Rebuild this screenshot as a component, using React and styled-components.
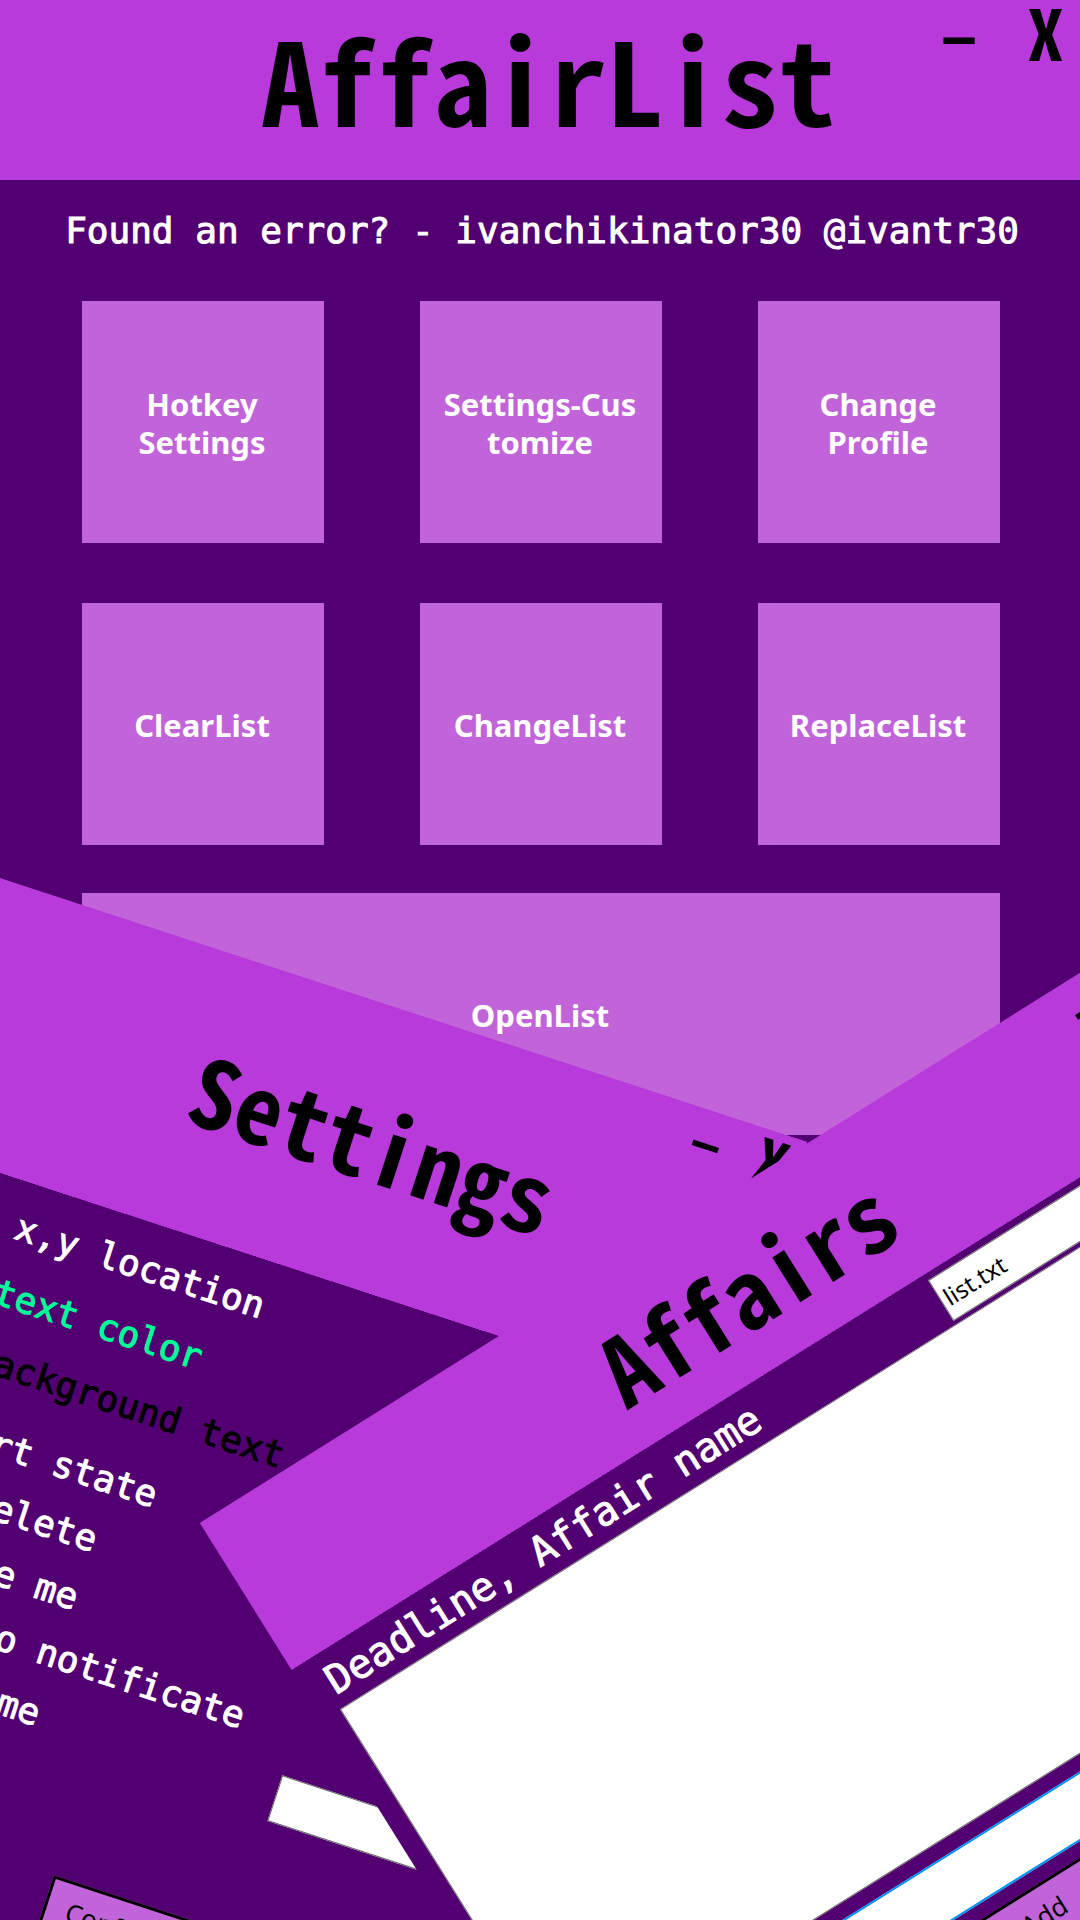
import React from "react";
import styled, { createGlobalStyle, css } from "styled-components";

const colors = {
  header: "#b83adb",
  body: "#520071",
  tile: "#c264d9",
  mint: "#00ff99",
  focus: "#0091f7",
  outline: "#6a6a6a",
};

const titleFont = `"Noto Sans Mono CJK JP", "DejaVu Sans Mono", monospace`;
const labelFont = `"DejaVu Sans Mono", monospace`;
const uiFont = `"Noto Sans", "Open Sans", sans-serif`;

const GlobalStyle = createGlobalStyle`
  *, *::before, *::after { box-sizing: border-box; }
  body { margin: 0; background: ${colors.body}; }
  h1, h2, p, ul { margin: 0; padding: 0; }
  button, input { font: inherit; margin: 0; }
`;

const Stage = styled.div`
  position: relative;
  min-height: 100vh;
  overflow: hidden;
  background: ${colors.body};
  color: #fff;
`;

/* A child window lying over the main one, turned around one of its top corners.
   The gradient paints bar and body in one layer, so turned edges stay clean. */
const FloatingWindow = styled.section`
  position: absolute;
  display: flex;
  flex-direction: column;
  background: linear-gradient(
    ${colors.header} ${(p) => p.$bar}px,
    ${colors.body} ${(p) => p.$bar}px
  );
`;

const SettingsWindow = styled(FloatingWindow)`
  top: 1142px;
  left: -73px;
  width: 880px;
  height: 1200px;
  transform-origin: top right;
  transform: rotate(18.1deg);
`;

const AffairsWindow = styled(FloatingWindow)`
  top: 1523px;
  left: 200px;
  width: 1120px;
  height: 960px;
  transform-origin: top left;
  transform: rotate(-32deg);
`;

const TitleBar = styled.header`
  display: grid;
  grid-template-columns: 1fr auto 1fr;
  align-items: start;
  flex: none;
  height: ${(p) => p.$height}px;
  padding-left: ${(p) => p.$inset}px;
  background: ${colors.header};
  color: #000;
`;

const Title = styled.h1`
  grid-column: 2;
  font: 700 ${(p) => p.$size}px/${(p) => p.$line}px ${titleFont};
  white-space: nowrap;
`;

const Controls = styled.div`
  justify-self: end;
  display: flex;
  gap: ${(p) => (p.$large ? 50 : 36)}px;
  padding-right: ${(p) => (p.$large ? 17 : 13)}px;
  font: 700 ${(p) => (p.$large ? "70px/62px" : "60px/54px")} ${titleFont};
`;

const ControlButton = styled.button`
  padding: 0;
  border: 0;
  background: none;
  color: #000;
  cursor: pointer;
`;

const Contact = styled.p`
  padding-left: 4px;
  font: 400 36px/101px ${labelFont};
  -webkit-text-stroke: 1px currentColor;
  text-align: center;
  white-space: nowrap;
`;

const Tiles = styled.nav`
  display: grid;
  grid-template-columns: repeat(3, 242px);
  justify-content: space-between;
  row-gap: 60px;
  padding: 20px 80px 0 82px;
`;

const Tile = styled.button`
  height: 242px;
  padding: 2px 16px 0 14px;
  border: 0;
  background: ${colors.tile};
  color: #fff;
  font: 700 31px/38px ${uiFont};
  text-align: center;
  cursor: pointer;
  ${(p) =>
    p.$wide &&
    css`
      grid-column: 1 / -1;
      margin-top: -12px;
    `}
`;

const Options = styled.ul`
  list-style: none;
  padding: 12px 0 0 3px;
  font: 400 36px ${labelFont};
  -webkit-text-stroke: 1px currentColor;
`;

const Option = styled.li`
  display: flex;
  height: ${(p) => (p.$tall ? 68 : 61)}px;
  line-height: ${(p) => (p.$tall ? 68 : 61)}px;
  margin-top: ${(p) => (p.$gap ? 12 : 0)}px;
  padding-left: ${(p) => p.$indent}ch;
  color: ${(p) => p.$color || "#fff"};
  white-space: pre;
`;

const TextField = styled.input`
  height: 48px;
  min-width: 0;
  padding: 0 4px;
  border: 1px solid ${colors.outline};
  border-radius: 0;
  outline: 0;
  background: #fff;
  color: #000;
  font: 400 24px ${uiFont};
`;

const OptionField = styled(TextField)`
  flex: 1;
  align-self: flex-end;
  margin: 0 60px 0 250px;
`;

const ActionButton = styled.button`
  height: 60px;
  padding: 0 20px;
  border: 3px solid #000;
  background: ${colors.tile};
  color: #000;
  font: 400 26px ${uiFont};
  cursor: pointer;
`;

const ConfirmButton = styled(ActionButton)`
  align-self: flex-start;
  margin: 118px 0 0 392px;
`;

const AffairsForm = styled.form`
  display: flex;
  flex-direction: column;
  padding: 7px 20px 20px;
`;

const AffairsTop = styled.div`
  display: flex;
  justify-content: space-between;
  align-items: center;
  padding-left: 4px;
`;

const ListLabel = styled.label`
  font: 400 40px/48px ${labelFont};
  -webkit-text-stroke: 1px currentColor;
  white-space: nowrap;
`;

const FileField = styled(TextField)`
  flex: 0 0 354px;
`;

const AffairsList = styled.textarea`
  height: 430px;
  margin: 4px 0 15px;
  padding: 8px;
  border: 1px solid ${colors.outline};
  outline: 0;
  background: #fff;
  color: #000;
  font: 400 24px ${uiFont};
  resize: none;
`;

const NewAffairField = styled(TextField)`
  height: 59px;
  border: 2px solid ${colors.focus};
`;

const AddButton = styled(ActionButton)`
  margin: 14px 104px 0 0;
`;

const tiles = [
  ["Hotkey", "Settings"],
  ["Settings-Cus", "tomize"],
  ["Change", "Profile"],
  ["ClearList"],
  ["ChangeList"],
  ["ReplaceList"],
];

const options = [
  { text: "x,y location", indent: 7, tall: true },
  { text: "text color", indent: 7, tall: true, color: colors.mint },
  { text: "ackground text", indent: 8, tall: true, color: "#000" },
  { text: "rt state", indent: 9, gap: true },
  { text: "elete", indent: 10 },
  { text: "e me", indent: 11 },
  { text: "o notificate", indent: 12 },
  { text: "me", indent: 13, field: true },
];

function WindowBar({ title, height, inset, size, line, large }) {
  return (
    <TitleBar $height={height} $inset={inset}>
      <Title as={large ? "h1" : "h2"} $size={size} $line={line}>
        {title}
      </Title>
      <Controls $large={large}>
        <ControlButton type="button">–</ControlButton>
        <ControlButton type="button">X</ControlButton>
      </Controls>
    </TitleBar>
  );
}

export default function App() {
  return (
    <Stage>
      <GlobalStyle />
      <main>
        <WindowBar title="AffairList" height={180} inset={18} size={115} line={154} large />
        <Contact>Found an error? - ivanchikinator30 @ivantr30</Contact>
        <Tiles>
          {tiles.map((lines) => (
            <Tile key={lines.join("")} type="button">
              {lines.map((line, i) => (
                <React.Fragment key={line}>
                  {i > 0 && <br />}
                  {line}
                </React.Fragment>
              ))}
            </Tile>
          ))}
          <Tile type="button" $wide>
            OpenList
          </Tile>
        </Tiles>
      </main>

      <SettingsWindow $bar={280}>
        <WindowBar title="Settings" height={280} inset={56} size={94} line={266} />
        <Options>
          {options.map((o) => (
            <Option key={o.text} $indent={o.indent} $tall={o.tall} $gap={o.gap} $color={o.color}>
              {o.field ? <label htmlFor="option-field">{o.text}</label> : o.text}
              {o.field && <OptionField id="option-field" type="text" />}
            </Option>
          ))}
        </Options>
        <ConfirmButton type="button">Confirm</ConfirmButton>
      </SettingsWindow>

      <AffairsWindow $bar={173}>
        <WindowBar title="Affairs" height={173} inset={52} size={94} line={180} />
        <AffairsForm>
          <AffairsTop>
            <ListLabel htmlFor="affairs-list">Deadline, Affair name</ListLabel>
            <FileField aria-label="File" type="text" defaultValue="list.txt" />
          </AffairsTop>
          <AffairsList id="affairs-list" />
          <NewAffairField aria-label="New affair" type="text" />
          <AddButton type="button">Add</AddButton>
        </AffairsForm>
      </AffairsWindow>
    </Stage>
  );
}
